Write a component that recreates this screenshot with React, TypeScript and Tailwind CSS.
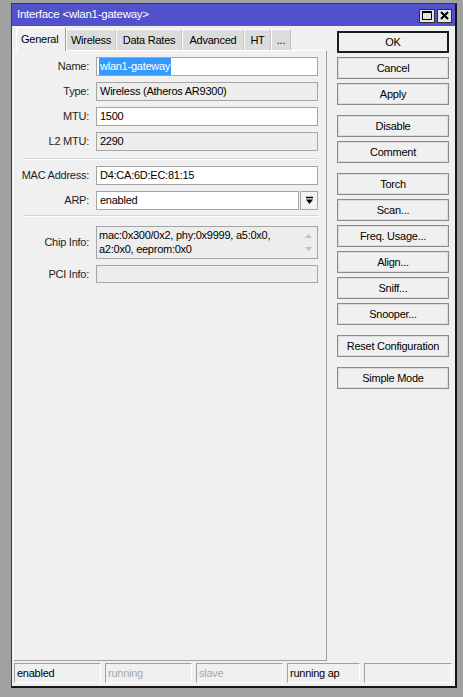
import React from "react";

const font = { fontFamily: '"Liberation Sans", Arial, sans-serif' };

type FieldProps = {
  label: string;
  children: React.ReactNode;
  className?: string;
};

// one label + control row of the form
const Field = ({ label, children, className = "" }: FieldProps) => (
  <div className={`flex items-center ${className}`}>
    <div className="w-[77px] shrink-0 pr-[2px] text-right text-[11px] text-[#1e1e1e]">{label}</div>
    <div className="ml-[5px] flex flex-1 pr-[8px]">{children}</div>
  </div>
);

const Input = ({ value, readOnly = false }: { value: string; readOnly?: boolean }) => (
  <div
    className={`flex h-[19px] flex-1 items-center border border-[#a5a5a5] pl-[3px] text-[11px] text-black ${
      readOnly ? "bg-[#ededed]" : "bg-white"
    }`}
  >
    {value}
  </div>
);

const Separator = ({ className = "" }: { className?: string }) => (
  <div className={`ml-[10px] mr-[8px] h-[2px] border-t border-[#d4d4d4] border-b border-b-white ${className}`} />
);

const tabs = [
  { name: "General", w: "w-[50px]", active: true },
  { name: "Wireless", w: "w-[50px]" },
  { name: "Data Rates", w: "w-[66px]" },
  { name: "Advanced", w: "w-[62px]" },
  { name: "HT", w: "w-[27px]" },
  { name: "...", w: "w-[20px]" },
];

const buttonGroups = [
  ["OK", "Cancel", "Apply"],
  ["Disable", "Comment"],
  ["Torch", "Scan...", "Freq. Usage...", "Align...", "Sniff...", "Snooper..."],
  ["Reset Configuration"],
  ["Simple Mode"],
];

const status = [
  { text: "enabled", w: "w-[87px]", dim: false },
  { text: "running", w: "w-[87px]", dim: true },
  { text: "slave", w: "w-[87px]", dim: true },
  { text: "running ap", w: "w-[73px]", dim: false },
  { text: "", w: "flex-1", dim: false },
];

export default function App() {
  return (
    <div className="h-[697px] w-[463px] bg-[#a0a0a0] pl-[11px] pt-[3px] tracking-[-0.25px]" style={font}>
      <div className="flex h-[685px] w-[446px] flex-col border-l border-t border-[#3c3c3c] border-r-2 border-b-2 border-r-[#161616] border-b-[#161616]">
        {/* title bar */}
        <div className="flex h-[22px] items-center justify-between bg-[#5151cd] pl-[5px] pr-[3px]">
          <span className="text-[11.5px] text-white">Interface &lt;wlan1-gateway&gt;</span>
          <div className="flex gap-[2px] pt-[1px]">
            <div className="flex h-[14px] w-[16px] items-center justify-center border border-[#303030] bg-[#e4e4e4]">
              <div className="h-[9px] w-[10px] border border-t-2 border-black" />
            </div>
            <div className="flex h-[14px] w-[15px] items-center justify-center border border-[#303030] bg-[#e4e4e4]">
              <svg width="9" height="9" viewBox="0 0 9 9">
                <path d="M1 1 L8 8 M8 1 L1 8" stroke="black" strokeWidth="2" />
              </svg>
            </div>
          </div>
        </div>

        {/* body */}
        <div className="flex flex-1 flex-col bg-[#f0f0f0] pb-[3px]">
          <div className="flex flex-1">
            {/* tabs + page */}
            <div className="ml-[1px] flex w-[314px] flex-col">
              <div className="flex h-[24px] items-end pl-[3px]">
                {tabs.map((t) =>
                  t.active ? (
                    <div
                      key={t.name}
                      className={`${t.w} relative z-10 -mb-px flex h-[24px] items-center border-l border-t border-white border-r border-r-[#a0a0a0] bg-[#f0f0f0] pl-[4px] text-[11px] text-black`}
                    >
                      {t.name}
                    </div>
                  ) : (
                    <div
                      key={t.name}
                      className={`${t.w} flex h-[21px] items-center justify-center border-l border-t border-white border-r border-r-[#c4c4c4] bg-[#dcdcdc] text-[11px] text-black`}
                    >
                      {t.name}
                    </div>
                  )
                )}
              </div>
              <div className="flex flex-1 flex-col border-l border-t border-white border-r border-b border-r-[#a0a0a0] border-b-[#a0a0a0] pt-[6px]">
                <Field label="Name:">
                  <div className="flex h-[19px] flex-1 items-center border border-[#a5a5a5] bg-white pl-[2px] text-[11px]">
                    <span className="bg-[#3399ff] px-[1px] text-white">wlan1-gateway</span>
                  </div>
                </Field>
                <Field label="Type:" className="mt-[6px]">
                  <Input value="Wireless (Atheros AR9300)" readOnly />
                </Field>
                <Field label="MTU:" className="mt-[6px]">
                  <Input value="1500" />
                </Field>
                <Field label="L2 MTU:" className="mt-[6px]">
                  <Input value="2290" readOnly />
                </Field>

                <Separator className="mt-[7px]" />

                <Field label="MAC Address:" className="mt-[6px]">
                  <Input value="D4:CA:6D:EC:81:15" />
                </Field>
                <Field label="ARP:" className="mt-[6px]">
                  <Input value="enabled" />
                  <div className="ml-[1px] flex h-[19px] w-[18px] items-center justify-center border border-[#a5a5a5] bg-[#f4f4f4]">
                    <svg width="9" height="9" viewBox="0 0 9 9">
                      <path d="M1 1.5 H8" stroke="black" strokeWidth="1.5" />
                      <path d="M1 3.5 H8 L4.5 8 Z" fill="black" />
                    </svg>
                  </div>
                </Field>

                <Separator className="mt-[5px]" />

                <Field label="Chip Info:" className="mt-[9px]">
                  <div className="flex h-[33px] flex-1 border border-[#a5a5a5] bg-[#ededed]">
                    <div className="flex-1 pl-[2px] pt-[1px] text-[11px] leading-[14px] text-black">
                      mac:0x300/0x2, phy:0x9999, a5:0x0,
                      <br />
                      a2:0x0, eeprom:0x0
                    </div>
                    <div className="flex w-[17px] flex-col items-center justify-between py-[7px]">
                      <svg width="7" height="4" viewBox="0 0 7 4">
                        <path d="M0 4 L3.5 0 L7 4 Z" fill="#c2c2c2" />
                      </svg>
                      <svg width="7" height="4" viewBox="0 0 7 4">
                        <path d="M0 0 L3.5 4 L7 0 Z" fill="#c2c2c2" />
                      </svg>
                    </div>
                  </div>
                </Field>
                <Field label="PCI Info:" className="mt-[6px]">
                  <div className="h-[18px] flex-1 border border-[#a5a5a5] bg-[#ededed]" />
                </Field>
              </div>
            </div>

            {/* action buttons */}
            <div className="ml-[10px] flex w-[112px] flex-col gap-[10px] pt-[5px]">
              {buttonGroups.map((g, gi) => (
                <div key={gi} className="flex flex-col gap-[4px]">
                  {g.map((b) => (
                    <div
                      key={b}
                      className={`flex h-[22px] items-center justify-center bg-[#f0f0f0] text-[11px] text-black ${
                        b === "OK"
                          ? "border-2 border-[#1c1c1c]"
                          : "border border-[#8a8a8a] shadow-[inset_0_0_0_1px_#dcdcdc]"
                      }`}
                    >
                      {b}
                    </div>
                  ))}
                </div>
              ))}
            </div>
          </div>

          {/* status bar */}
          <div className="mt-[2px] flex h-[20px] gap-[4px] pl-[2px] pr-[3px]">
            {status.map((s, i) => (
              <div
                key={i}
                className={`${s.w} flex items-center border-l border-t border-[#a0a0a0] border-r border-b border-r-white border-b-white pl-[2px] text-[11px] ${
                  s.dim ? "text-[#a8a8a8]" : "text-black"
                }`}
              >
                {s.text}
              </div>
            ))}
          </div>
        </div>
      </div>
    </div>
  );
}
